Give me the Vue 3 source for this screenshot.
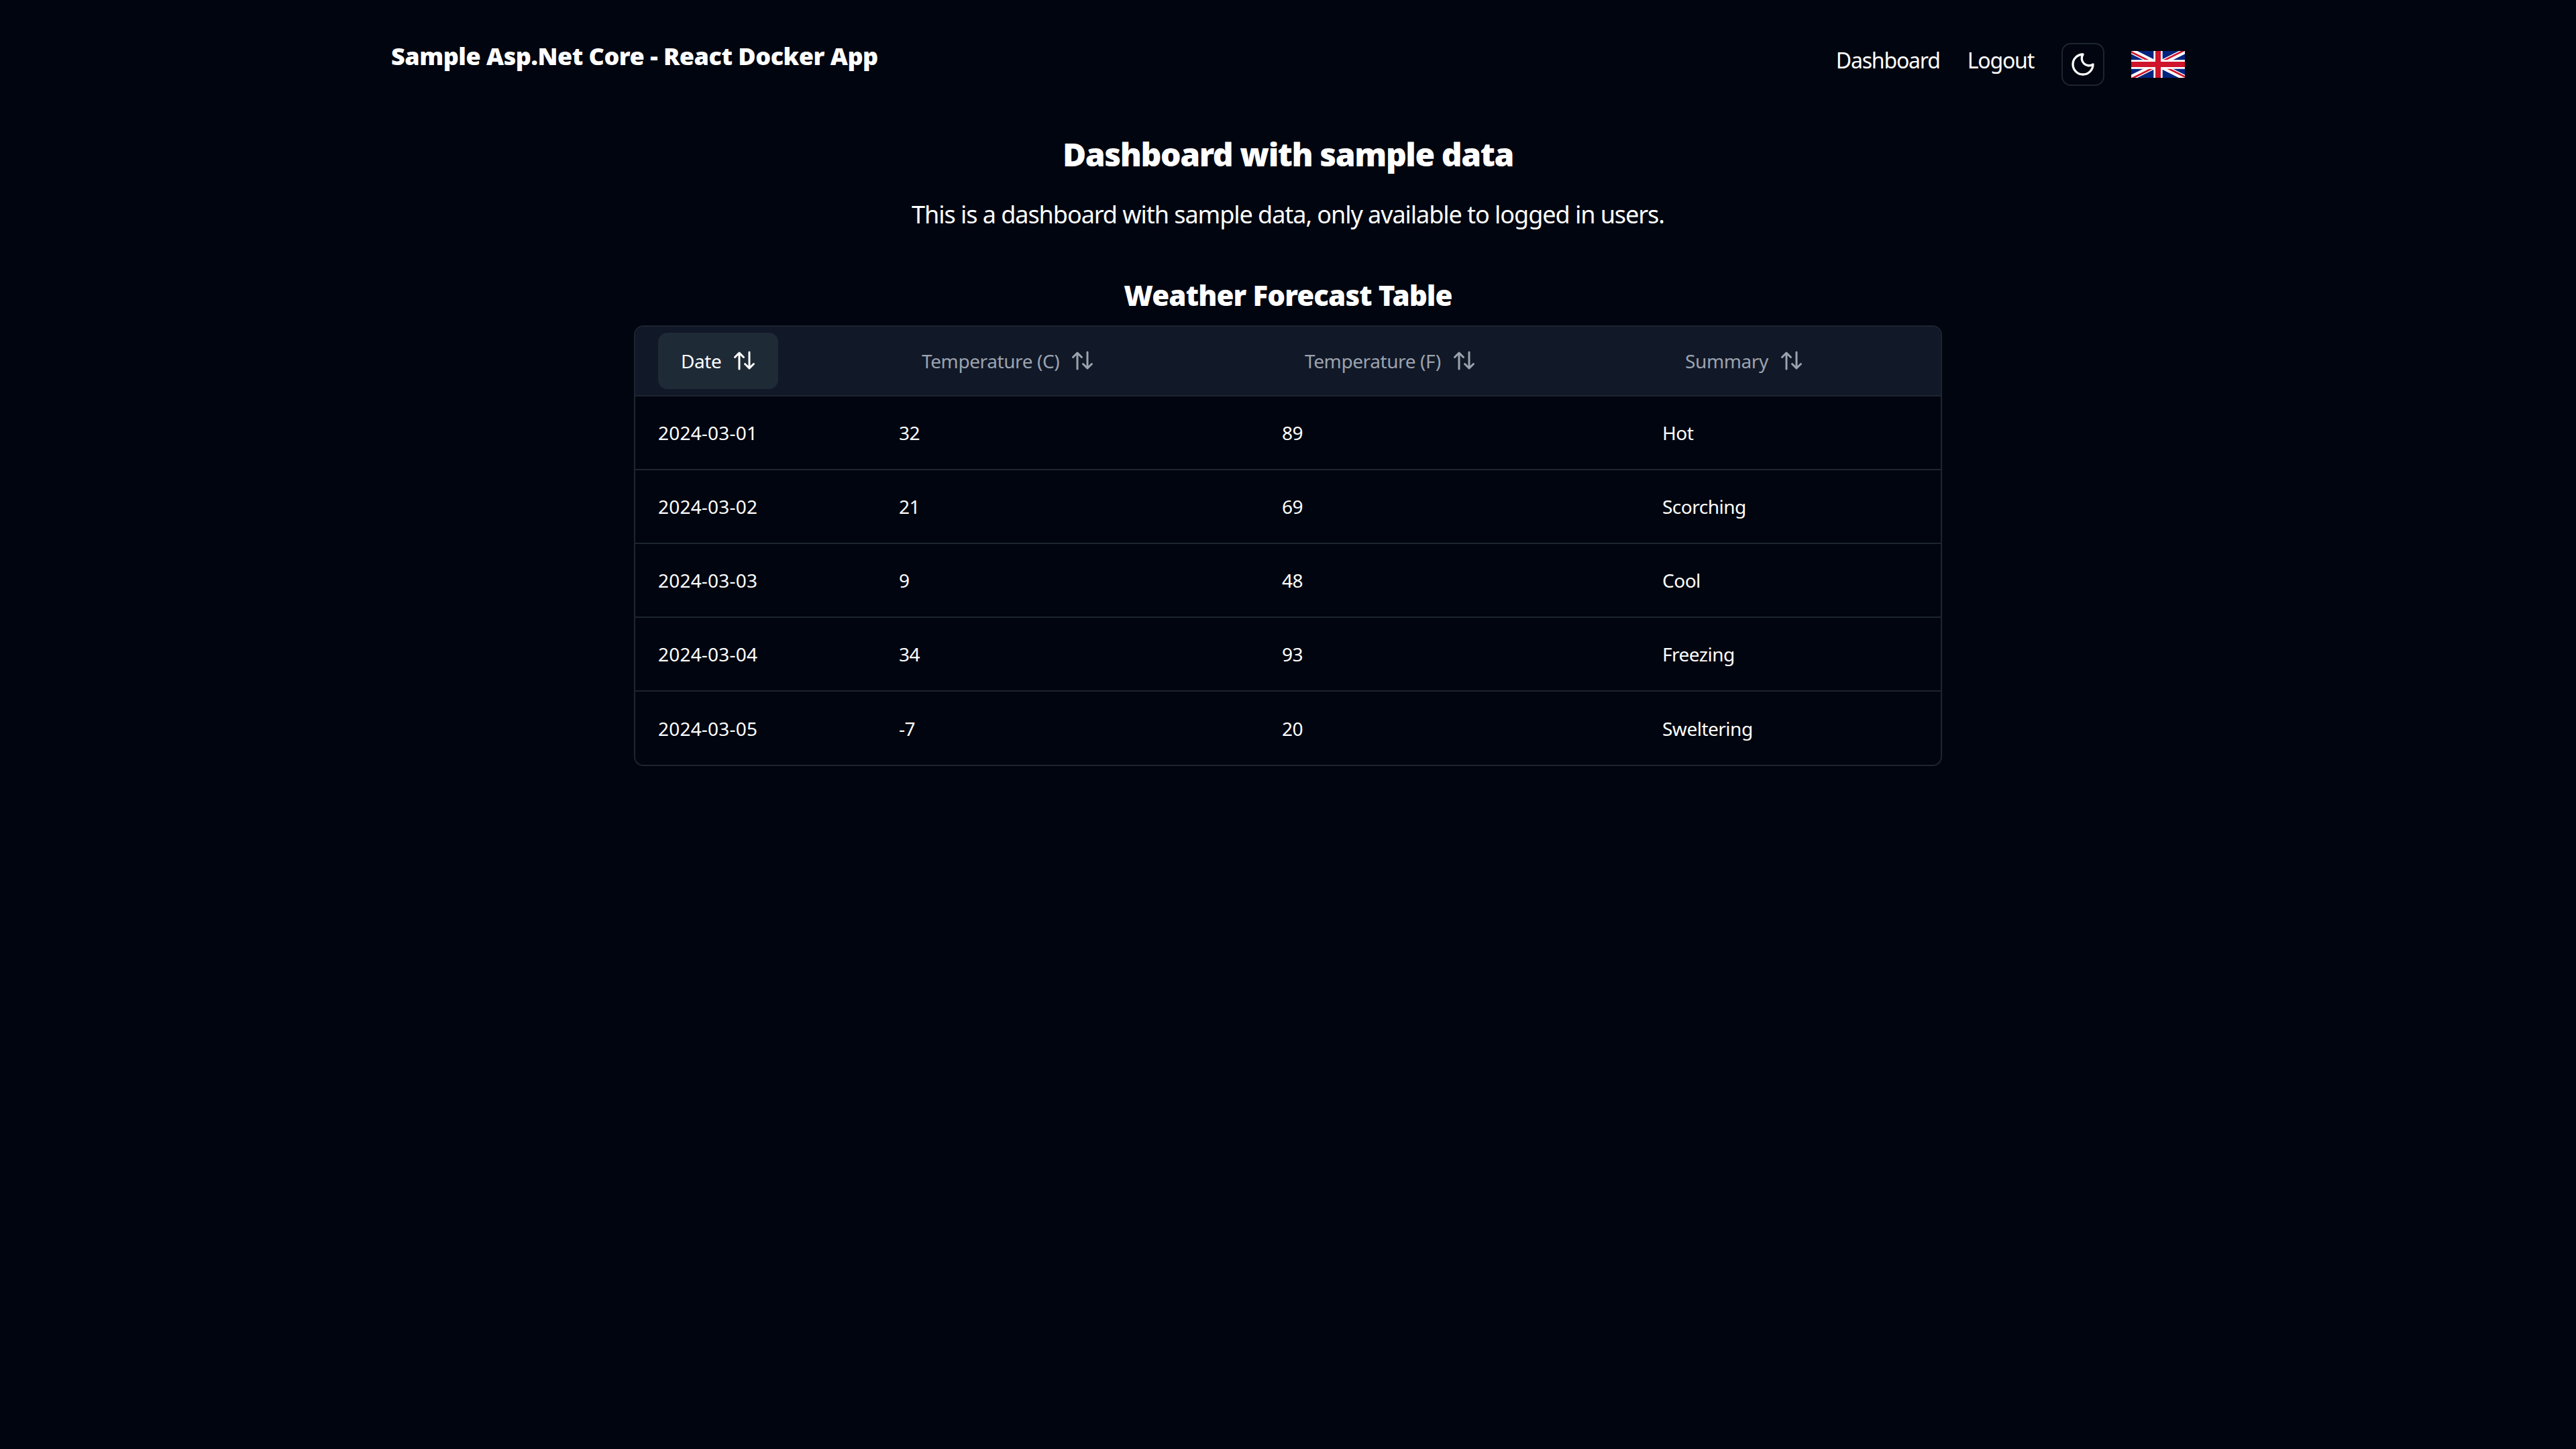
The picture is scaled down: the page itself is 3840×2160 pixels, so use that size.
<script setup>
const rows = [
  ['2024-03-01', 32, 89, 'Hot'],
  ['2024-03-02', 21, 69, 'Scorching'],
  ['2024-03-03', 9, 48, 'Cool'],
  ['2024-03-04', 34, 93, 'Freezing'],
  ['2024-03-05', -7, 20, 'Sweltering'],
]
const heads = ['Date', 'Temperature (C)', 'Temperature (F)', 'Summary']
</script>

<template>
  <div class="page">
    <header class="nav">
      <div class="brand">Sample Asp.Net Core - React Docker App</div>
      <div class="links">
        <a class="link">Dashboard</a>
        <a class="link">Logout</a>
        <button class="theme">
          <svg width="40" height="40" viewBox="0 0 24 24" fill="none" stroke="#fff" stroke-width="2" stroke-linecap="round" stroke-linejoin="round"><path d="M12 3a6.500 6.500 0 0 0 9 9 9 9 0 1 1-9-9Z"/></svg>
        </button>
        <svg class="flag" width="80" height="40" viewBox="0 0 60 30" preserveAspectRatio="none">
          <clipPath id="flag-t"><path d="M30 15h30v15zv15H0zH0V0zV0h30z"/></clipPath>
          <rect width="60" height="30" fill="#00247d"/>
          <path d="M0 0L60 30M60 0L0 30" stroke="#fff" stroke-width="6"/>
          <path d="M0 0L60 30M60 0L0 30" stroke="#cf142b" stroke-width="4" clip-path="url(#flag-t)"/>
          <path d="M30 0V30M0 15H60" stroke="#fff" stroke-width="10"/>
          <path d="M30 0V30M0 15H60" stroke="#cf142b" stroke-width="6"/>
        </svg>
      </div>
    </header>
    <main class="main">
      <h1 class="title">Dashboard with sample data</h1>
      <p class="intro">This is a dashboard with sample data, only available to logged in users.</p>
      <h2 class="subtitle">Weather Forecast Table</h2>
      <div class="card">
        <table class="table">
          <colgroup>
            <col class="c1" /><col class="c2" /><col class="c3" /><col class="c4" />
          </colgroup>
          <thead>
            <tr>
              <th v-for="(h, i) in heads" :key="h">
                <span class="sort" :class="{ active: i === 0 }">
                  <span>{{ h }}</span>
                  <svg width="36" height="36" viewBox="0 0 36 36" fill="none" stroke="currentColor" stroke-width="3" stroke-linecap="round" stroke-linejoin="round"><path d="M12 30V6M5.500 12.500L12 6l6.500 6.500M27 5v24M20.500 22.500L27 29l6.500-6.500"/></svg>
                </span>
              </th>
            </tr>
          </thead>
          <tbody>
            <tr v-for="r in rows" :key="r[0]">
              <td v-for="(c, j) in r" :key="j" :class="{ date: j === 0 }">{{ c }}</td>
            </tr>
          </tbody>
        </table>
      </div>
    </main>
  </div>
</template>

<style>
html, body { margin: 0; background: #01050f; }
</style>

<style scoped>
.page {
  width: 3840px;
  height: 2160px;
  background: #01050f;
  color: #fff;
  font-family: "Noto Sans", "Open Sans", sans-serif;
  overflow: hidden;
  box-sizing: border-box;
}
.nav {
  margin: 0 auto;
  width: 2674px;
  height: 160px;
  display: flex;
  justify-content: space-between;
  align-items: flex-start;
}
.brand {
  font-size: 36px;
  font-weight: 900;
  line-height: 48px;
  margin-top: 60px;
  letter-spacing: -0.5px;
}
.links {
  display: flex;
  align-items: center;
  margin-top: 64px;
  height: 64px;
}
.link {
  font-size: 32px;
  letter-spacing: -1.2px;
  margin-right: 41px;
  line-height: 48px;
  margin-top: -12px;
}
.theme {
  width: 64px;
  height: 64px;
  box-sizing: border-box;
  border: 2px solid #1c2530;
  border-radius: 14px;
  background: transparent;
  padding: 0;
  display: flex;
  align-items: center;
  justify-content: center;
  margin-right: 40px;
}
.flag { display: block; }
.main { text-align: center; }
.title {
  margin: 40px 0 0;
  font-size: 48px;
  line-height: 60px;
  font-weight: 900;
  letter-spacing: -1.4px;
}
.intro {
  margin: 35px 0 0;
  font-size: 36px;
  line-height: 50px;
  letter-spacing: -1.05px;
}
.subtitle {
  margin: 67px 0 0;
  font-size: 42px;
  line-height: 56px;
  font-weight: 900;
  letter-spacing: -0.85px;
}
.card {
  width: 1950px;
  margin: 17px auto 0;
  box-sizing: border-box;
  border: 2px solid #1c2530;
  border-radius: 14px;
  overflow: hidden;
  text-align: left;
}
.table {
  width: 100%;
  border-collapse: collapse;
  table-layout: fixed;
  font-size: 28px;
}
.c1 { width: 359px; }
.c2 { width: 571px; }
.c3 { width: 567px; }
th {
  height: 102px;
  padding: 0 34px;
  background: #111827;
  font-weight: 400;
  text-align: left;
  color: #9ca3af;
  border-bottom: 2px solid #1c2530;
}
.sort {
  display: inline-flex;
  align-items: center;
  gap: 15px;
  height: 84px;
  padding: 0 34px;
  margin-left: 0;
  border-radius: 14px;
  box-sizing: border-box;
  vertical-align: middle;
  letter-spacing: -0.4px;
}
.sort.active { background: #1f2a37; color: #fff; }
td {
  height: 110px;
  padding: 0 34px;
  border-top: 2px solid #1c2530;
  letter-spacing: -0.5px;
  box-sizing: border-box;
}
td.date { letter-spacing: 0.2px; }
tbody tr:first-child td { border-top: 0; }
</style>
